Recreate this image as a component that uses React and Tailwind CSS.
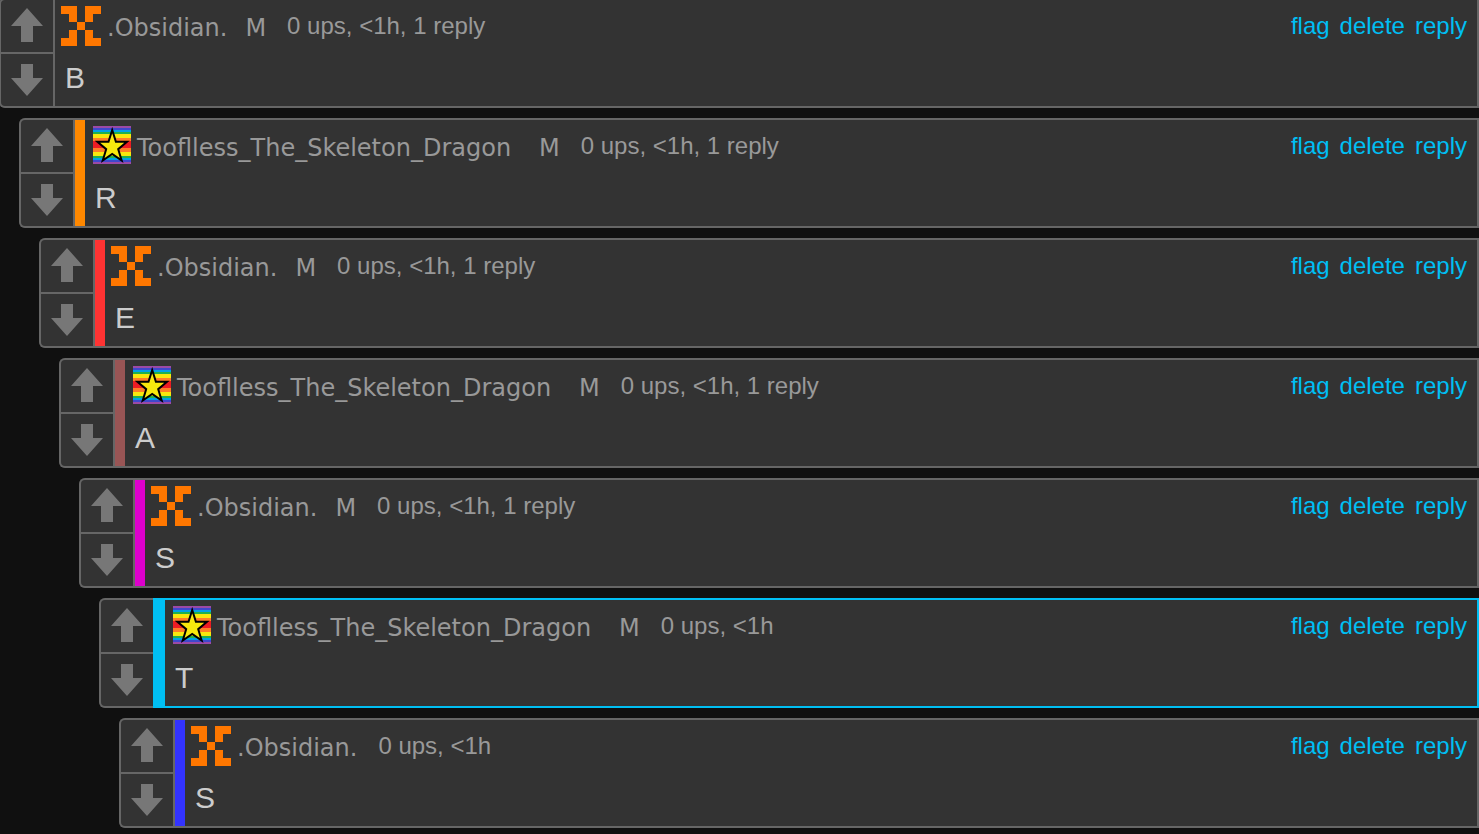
import clsx from "clsx";

const comments = [
  { user: "obsidian", text: "B", replies: 1, mod: true, indent: "-ml-px", bar: null },
  { user: "tooflless", text: "R", replies: 1, mod: true, indent: "ml-[19px]", bar: "bg-[#ff8800]" },
  { user: "obsidian", text: "E", replies: 1, mod: true, indent: "ml-[39px]", bar: "bg-[#ff3333]" },
  { user: "tooflless", text: "A", replies: 1, mod: true, indent: "ml-[59px]", bar: "bg-[#995555]" },
  { user: "obsidian", text: "S", replies: 1, mod: true, indent: "ml-[79px]", bar: "bg-[#dd00cc]" },
  { user: "tooflless", text: "T", replies: 0, mod: true, indent: "ml-[99px]", bar: "bg-[#00bff3]", active: true },
  { user: "obsidian", text: "S", replies: 0, mod: false, indent: "ml-[119px]", bar: "bg-[#3333ff]" },
];

const users = {
  obsidian: { name: ".Obsidian.", width: "min-w-[120px]", Icon: PixelIcon },
  tooflless: { name: "Tooflless_The_Skeleton_Dragon", width: "min-w-[384px]", Icon: StarIcon },
};

function PixelIcon() {
  return (
    <svg className="w-10 h-10 ml-[6px] shrink-0" viewBox="0 0 5 5" shapeRendering="crispEdges" fill="#ff7700" aria-hidden="true">
      <path d="M0 0h2v2h-1v-1h-1zM3 0h2v1h-1v1h-1zM2 2h1v1h-1zM1 3h1v2h-2v-1h1zM3 3h1v1h1v1h-2z" />
    </svg>
  );
}

function StarIcon() {
  return (
    <svg className="w-[38px] h-[38px] ml-2 shrink-0" viewBox="0 0 38 38" aria-hidden="true">
      <rect width="38" height="38" fill="#9b4aa5" />
      <rect y="2" width="38" height="34" fill="#3f48cc" />
      <rect y="4" width="38" height="30" fill="#00a2e8" />
      <rect y="6" width="38" height="26" fill="#22b14c" />
      <rect y="8" width="38" height="22" fill="#f7e80e" />
      <rect y="12" width="38" height="14" fill="#ff7f27" />
      <rect y="15" width="38" height="7" fill="#ed1c24" />
      <path
        d="M19.2 4L22.9 15.8H34L25.2 23.2L28.7 34.6L19.2 28L9.7 34.6L13.2 23.2L4.4 15.8H15.5Z"
        fill="#f7e80e"
        stroke="#000"
        strokeWidth="2"
      />
    </svg>
  );
}

function Votes() {
  return (
    <div className="w-[54px] shrink-0 flex flex-col border-2 border-r-0 border-[#666] rounded-l-md overflow-hidden">
      <button type="button" aria-label="Upvote" className="flex-1 cursor-pointer">
        <svg className="w-[52px] h-[52px]" viewBox="0 0 52 52" fill="#777">
          <path d="M26 8L42 26H32V42H20V26H10Z" />
        </svg>
      </button>
      <button type="button" aria-label="Downvote" className="flex-1 border-t-2 border-[#666] cursor-pointer">
        <svg className="w-[52px] h-[52px]" viewBox="0 0 52 52" fill="#777">
          <path d="M20 10H32V24H42L26 42L10 24H20Z" />
        </svg>
      </button>
    </div>
  );
}

function Comment({ user, text, replies, mod, indent, bar, active }) {
  const { name, width, Icon } = users[user];

  return (
    <li className={clsx("flex bg-[#333] rounded-l-md", indent)}>
      <Votes />
      <div className={clsx("flex-1 min-w-0 flex border-2", active ? "border-[#00bff3]" : "border-[#666]")}>
        {bar && <div className={clsx("w-[10px] shrink-0", bar)} />}
        <div className="flex-1 min-w-0 pt-[6px] pb-2">
          <div className="flex h-10 text-2xl/10 text-[#999] whitespace-nowrap">
            <Icon />
            <a href="#" className={clsx("ml-[6px] pt-[2px] font-['DejaVu_Sans',Verdana,sans-serif]", width)}>{name}</a>
            {mod && <span className="ml-[18px] pt-[2px] font-['DejaVu_Sans',Verdana,sans-serif]">M</span>}
            <span className="ml-[21px]">
              0 ups, &lt;1h{replies > 0 && `, ${replies} reply`}
            </span>
            <div className="ml-auto mr-[10px] flex gap-[10px] text-[#00bff3]">
              <a href="#">flag</a>
              <a href="#">delete</a>
              <a href="#">reply</a>
            </div>
          </div>
          <p className="mt-3 ml-[10px] text-3xl/10 text-[#ccc]">{text}</p>
        </div>
      </div>
    </li>
  );
}

export default function App() {
  return (
    <main className="min-h-screen overflow-hidden bg-[#101010] font-['Liberation_Sans',Arial,sans-serif]">
      <ul className="-mt-[2px] flex flex-col gap-[10px]">
        {comments.map((comment, i) => (
          <Comment key={i} {...comment} />
        ))}
      </ul>
    </main>
  );
}
